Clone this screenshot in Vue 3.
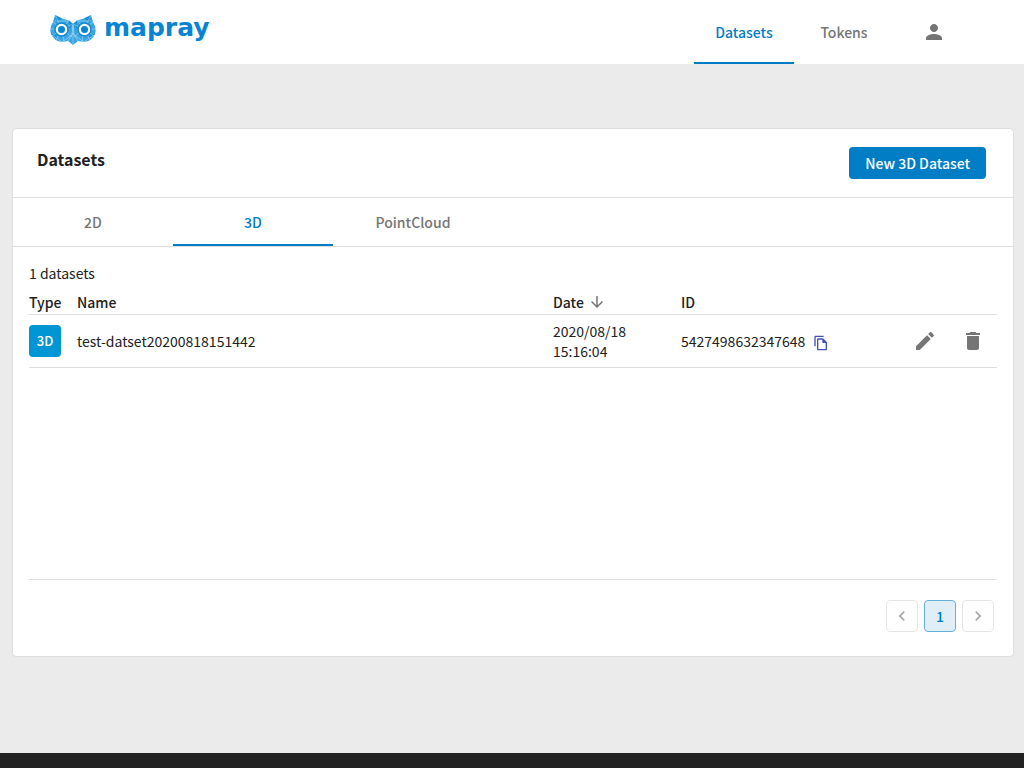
<script setup>
import { ref, computed } from 'vue'

const navItems = ['Datasets', 'Tokens']
const activeNav = ref('Datasets')
const tabs = ['2D', '3D', 'PointCloud']
const activeTab = ref('3D')
const datasets = ref([
  { type: '3D', name: 'test-datset20200818151442', day: '2020/08/18', time: '15:16:04', id: '5427498632347648' }
])
const countLabel = computed(() => `${datasets.value.length} datasets`)
</script>

<template>
  <div class="page">
    <header class="topbar">
      <a class="brand" href="#" aria-label="mapray">
        <svg class="owl" viewBox="0 0 46 30" aria-hidden="true">
          <path fill="#3aa5e2" d="M5 0 L12 3.500 L19 5.500 L23 9 L27 5.500 L34 3.500 L41 0 L43 7 Q47 13 45 19 Q42 26 34 27 L28 26 L23 30 L18 26 L12 27 Q4 26 1 19 Q-1 13 3 7 Z" />
          <path fill="#1b90d8" d="M5 0 L12 3.500 L6 8 Z M41 0 L34 3.500 L40 8 Z M19 5.500 L23 9 L19 14 Z M27 5.500 L23 9 L27 14 Z M1 19 L5 19 L9 26 Z M45 19 L41 19 L37 26 Z" />
          <g fill="none" stroke="#a9daf4" stroke-width=".6">
            <path d="M5 0 L12 14 L2 21 M19 5 L12 14 L0 14 M3 7 L12 14 L14 27 M6 25 L12 14 L23 9 M12 14 L22 22 M5 6 L18 6 M2 20 L12 27 L22 20 L23 10" />
            <path d="M41 0 L34 14 L44 21 M27 5 L34 14 L46 14 M43 7 L34 14 L32 27 M40 25 L34 14 L23 9 M34 14 L24 22 M41 6 L28 6 M44 20 L34 27 L24 20 L23 10" />
            <path d="M23 10 V30 M18 26 L23 18 L28 26" />
          </g>
          <g fill="#fff" stroke="#1289d3" stroke-width="1.500">
            <circle cx="11.500" cy="14.500" r="6.500" />
            <circle cx="34.500" cy="14.500" r="6.500" />
          </g>
          <g fill="#0884d2">
            <circle cx="11.500" cy="14.500" r="3.500" />
            <circle cx="34.500" cy="14.500" r="3.500" />
          </g>
        </svg>
        <span class="wordmark">mapray</span>
      </a>
      <nav class="nav">
        <a
          v-for="item in navItems"
          :key="item"
          href="#"
          class="nav-link"
          :class="{ active: item === activeNav }"
          @click.prevent="activeNav = item"
        >{{ item }}</a>
        <button class="account" type="button" aria-label="Account">
          <svg viewBox="0 0 24 24" width="24" height="24"><path d="M12 12c2.210 0 4-1.790 4-4s-1.790-4-4-4-4 1.790-4 4 1.790 4 4 4zm0 2c-2.670 0-8 1.340-8 4v2h16v-2c0-2.660-5.330-4-8-4z" /></svg>
        </button>
      </nav>
    </header>

    <main class="content">
      <section class="card">
        <div class="card-head">
          <h1>Datasets</h1>
          <button class="primary" type="button">New 3D Dataset</button>
        </div>
        <div class="tabs" role="tablist">
          <button
            v-for="tab in tabs"
            :key="tab"
            type="button"
            role="tab"
            class="tab"
            :class="{ active: tab === activeTab }"
            :aria-selected="tab === activeTab"
            @click="activeTab = tab"
          >{{ tab }}</button>
        </div>
        <div class="card-body">
          <p class="count">{{ countLabel }}</p>
          <div class="table-area">
            <table>
              <thead>
                <tr>
                  <th class="col-type">Type</th>
                  <th>Name</th>
                  <th class="col-date">
                    <span class="sort">Date
                      <svg viewBox="0 0 24 24" width="18" height="18" aria-hidden="true"><path d="M20 12l-1.410-1.410L13 16.170V4h-2v12.170l-5.580-5.590L4 12l8 8 8-8z" /></svg>
                    </span>
                  </th>
                  <th class="col-id">ID</th>
                  <th class="col-actions"></th>
                </tr>
              </thead>
              <tbody>
                <tr v-for="row in datasets" :key="row.id">
                  <td><span class="badge">{{ row.type }}</span></td>
                  <td>{{ row.name }}</td>
                  <td>{{ row.day }}<br>{{ row.time }}</td>
                  <td>
                    <span class="id-cell">{{ row.id }}
                      <button class="copy" type="button" aria-label="Copy ID">
                        <svg viewBox="0 0 24 24" width="16" height="16"><path d="M16 1H4c-1.100 0-2 .9-2 2v14h2V3h12V1zm-1 4l6 6v10c0 1.100-.9 2-2 2H7.990C6.890 23 6 22.100 6 21l.01-14c0-1.100.89-2 1.990-2h7zM8 7v14h11v-9h-5V7H8z" /></svg>
                      </button>
                    </span>
                  </td>
                  <td>
                    <div class="actions">
                      <button type="button" aria-label="Edit">
                        <svg viewBox="0 0 24 24" width="24" height="24"><path d="M3 17.250V21h3.750L17.810 9.940l-3.750-3.750L3 17.250zM20.710 7.040c.39-.39.39-1.020 0-1.410l-2.340-2.340c-.39-.39-1.020-.39-1.410 0l-1.830 1.830 3.750 3.750 1.830-1.830z" /></svg>
                      </button>
                      <button type="button" aria-label="Delete">
                        <svg viewBox="0 0 24 24" width="24" height="24"><path d="M6 19c0 1.100.9 2 2 2h8c1.100 0 2-.9 2-2V7H6v12zM19 4h-3.500l-1-1h-5l-1 1H5v2h14V4z" /></svg>
                      </button>
                    </div>
                  </td>
                </tr>
              </tbody>
            </table>
          </div>
          <nav class="pager" aria-label="Pages">
            <button type="button" aria-label="Previous page">
              <svg viewBox="0 0 24 24" width="20" height="20"><path d="M15.410 7.410L14 6l-6 6 6 6 1.410-1.410L10.830 12z" /></svg>
            </button>
            <button type="button" class="current" aria-current="page">1</button>
            <button type="button" aria-label="Next page">
              <svg viewBox="0 0 24 24" width="20" height="20"><path d="M10 6L8.590 7.410 13.170 12l-4.580 4.590L10 18l6-6z" /></svg>
            </button>
          </nav>
        </div>
      </section>
    </main>
    <footer class="footer"></footer>
  </div>
</template>

<style>
body {
  background: #ebebeb;
}
</style>

<style scoped>
.page {
  min-height: 100vh;
  display: flex;
  flex-direction: column;
  background: #ebebeb;
  color: #212121;
  font-family: "Noto Sans CJK JP", "Noto Sans", sans-serif;
  font-size: 14px;
  line-height: 20px;
}
.page *,
.page {
  box-sizing: border-box;
}
button {
  font: inherit;
  color: inherit;
  background: none;
  border: 0;
  padding: 0;
  cursor: pointer;
}
svg {
  display: block;
  fill: currentColor;
}
.topbar {
  height: 64px;
  padding: 0 78px 0 50px;
  display: flex;
  justify-content: space-between;
  background: #fff;
}
.brand {
  display: flex;
  align-items: center;
  gap: 8px;
  height: 60px;
  color: #0884d2;
  text-decoration: none;
}
.owl {
  width: 46px;
  height: 30px;
}
.wordmark {
  padding-bottom: 4px;
  font-family: "DejaVu Sans", sans-serif;
  font-size: 25px;
  font-weight: 700;
  line-height: 32px;
}
.nav {
  display: flex;
}
.nav-link {
  width: 100px;
  padding-top: 2px;
  display: flex;
  align-items: center;
  justify-content: center;
  border-bottom: 2px solid transparent;
  color: #757575;
  font-weight: 500;
  text-decoration: none;
}
.nav-link.active {
  color: #007dc5;
  border-bottom-color: #007dc5;
}
.account {
  width: 24px;
  margin-left: 28px;
  color: #757575;
}
.content {
  flex: 1;
  padding: 64px 10px 64px 12px;
}
.card {
  background: #fff;
  border: 1px solid #dedede;
  border-radius: 4px;
}
.card-head {
  height: 69px;
  padding: 0 27px 0 24px;
  display: flex;
  align-items: center;
  justify-content: space-between;
  border-bottom: 1px solid #dedede;
}
h1 {
  margin: 0;
  padding-bottom: 8px;
  font-size: 16px;
  line-height: 24px;
  font-weight: 700;
}
.primary {
  height: 32px;
  padding: 0 16px;
  border-radius: 4px;
  background: #007dc5;
  color: #fff;
  font-weight: 500;
}
.tabs {
  display: flex;
  height: 49px;
  border-bottom: 1px solid #dedede;
}
.tab {
  width: 160px;
  padding-top: 2px;
  border-bottom: 2px solid transparent;
  color: #757575;
  font-weight: 500;
}
.tab.active {
  color: #007dc5;
  border-bottom-color: #007dc5;
}
.card-body {
  padding: 16px 16px 24px;
}
.count {
  margin: 0 0 7px;
}
.table-area {
  min-height: 290px;
  border-bottom: 1px solid #dedede;
}
table {
  width: 100%;
  table-layout: fixed;
  border-collapse: separate;
  border-spacing: 0;
}
th,
td {
  padding: 0;
  text-align: left;
  border-bottom: 1px solid #dedede;
}
th {
  height: 25px;
  font-weight: 500;
}
td {
  height: 53px;
  vertical-align: middle;
}
.col-type {
  width: 48px;
}
.col-date {
  width: 128px;
}
.col-id {
  width: 220px;
}
.col-actions {
  width: 96px;
}
.sort {
  display: flex;
  align-items: center;
  gap: 4px;
}
.sort svg {
  color: #757575;
}
.badge {
  display: flex;
  align-items: center;
  justify-content: center;
  width: 32px;
  height: 32px;
  border-radius: 4px;
  background: #0095d5;
  color: #fff;
  font-size: 13px;
  font-weight: 500;
}
.id-cell {
  display: flex;
  align-items: center;
  gap: 8px;
}
.copy {
  padding-top: 4px;
  color: #3f51b5;
}
.actions {
  display: flex;
}
.actions button {
  width: 48px;
  height: 48px;
  display: flex;
  align-items: center;
  justify-content: center;
  color: #757575;
}
.pager {
  display: flex;
  justify-content: flex-end;
  gap: 6px;
  padding: 20px 3px 0 0;
}
.pager button {
  width: 32px;
  height: 32px;
  display: flex;
  align-items: center;
  justify-content: center;
  border: 1px solid #e6e6e6;
  border-radius: 4px;
  color: #a8a8a8;
}
.pager .current {
  border-color: #67b1dd;
  background: #e0eef8;
  color: #007dc5;
  font-weight: 500;
}
.footer {
  height: 15px;
  background: #222;
}
</style>
